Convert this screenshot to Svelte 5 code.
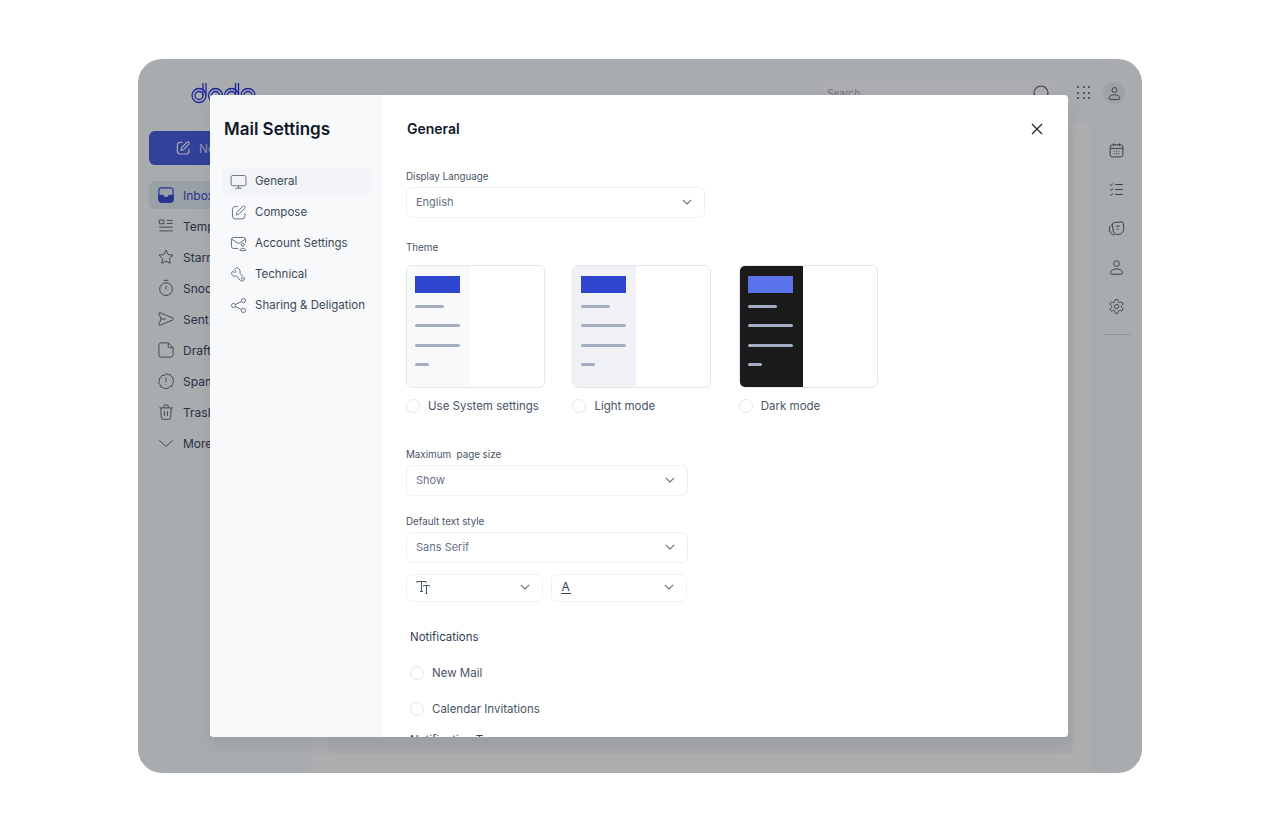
<script>
  const folders = [
    { label: "Inbox", icon: "inbox", active: true },
    { label: "Templates", icon: "templates" },
    { label: "Starred", icon: "star" },
    { label: "Snoozed", icon: "timer" },
    { label: "Sent", icon: "send" },
    { label: "Drafts", icon: "draft" },
    { label: "Spam", icon: "spam" },
    { label: "Trash", icon: "trash" },
    { label: "More", icon: "chevron" }
  ];

  const settings = [
    { label: "General", icon: "monitor", active: true },
    { label: "Compose", icon: "compose" },
    { label: "Account Settings", icon: "account" },
    { label: "Technical", icon: "wrench" },
    { label: "Sharing & Deligation", icon: "share" }
  ];

  const themes = [
    { label: "Use System settings", kind: "system" },
    { label: "Light mode", kind: "light" },
    { label: "Dark mode", kind: "dark" }
  ];

  const railIcons = ["calendar", "tasks", "notes", "person", "gear"];
  const previewLines = [29, 45, 45, 14];

  const icons = {
    inbox: "M6 2.500h12a3.500 3.500 0 0 1 3.500 3.500v12a3.500 3.500 0 0 1-3.500 3.500H6A3.500 3.500 0 0 1 2.500 18V6A3.500 3.500 0 0 1 6 2.500z",
    inboxTray: "M2.500 12.500H7c1 0 1.500.6 2 1.500s1.500 1.800 3 1.800 2.500-.9 3-1.800 1-1.500 2-1.500h4.500V18a3.500 3.500 0 0 1-3.500 3.500H6A3.500 3.500 0 0 1 2.500 18z",
    templates: "M3 4h6v5H3z M13 4.500h8 M13 8.500h8 M3 13.500h18 M3 18.500h18",
    star: "M12 2.800l2.800 5.900 6.400.9-4.600 4.500 1.100 6.400-5.700-3-5.700 3 1.100-6.400-4.600-4.500 6.400-.9z",
    timer: "M12 5a8.500 8.500 0 1 1 0 17 8.500 8.500 0 0 1 0-17z M9 1.800h6 M12 9v5",
    send: "M4 3.500c-1-.4-1.800.5-1.400 1.500L5.500 12l-2.900 7c-.4 1 .4 1.900 1.400 1.500l17-7.300c1-.5 1-1.900 0-2.400z M5.500 12h6",
    draft: "M6 2.500h9l6.500 6.500v9a3.500 3.500 0 0 1-3.500 3.500H6A3.500 3.500 0 0 1 2.500 18V6A3.500 3.500 0 0 1 6 2.500z M15 2.500V7a2 2 0 0 0 2 2h4.500",
    spam: "M12 2l2.600 1.700 3.100-.2 1.300 2.800 2.700 1.500-.6 3 1.400 2.800-2.100 2.200-.5 3.100-3 .5L14.500 21.700 12 22l-2.500-.3-1.900-1.300-3-.5-.5-3.100L2 14.600l1.400-2.800-.6-3 2.700-1.500 1.300-2.800 3.100.2z M12 7.500v6 M12 16v.6",
    trash: "M3 6.500h18 M9 6.500V4.200a1.500 1.500 0 0 1 1.500-1.500h3A1.500 1.500 0 0 1 15 4.200v2.300 M5 6.500l.8 13a2.500 2.500 0 0 0 2.500 2.300h7.400a2.500 2.500 0 0 0 2.500-2.300l.8-13 M10 11v6 M14 11v6",
    chevron: "M3 8.500l9 8 9-8",
    monitor: "M4 3.500h16a2.500 2.500 0 0 1 2.500 2.500v9.500a2.500 2.500 0 0 1-2.500 2.500H4a2.500 2.500 0 0 1-2.500-2.500V6A2.500 2.500 0 0 1 4 3.500z M12 18v3.500 M7.500 21.500h9",
    compose: "M11 3.500H7.500a4 4 0 0 0-4 4V17a4 4 0 0 0 4 4H17a4 4 0 0 0 4-4v-4 M9 15.500l.8-3.800L18 3.300a1.800 1.800 0 0 1 2.600 0l.2.200a1.800 1.800 0 0 1 0 2.600L12.500 14.700z",
    account: "M11.500 19H5a3 3 0 0 1-3-3V6.500a3 3 0 0 1 3-3h14a3 3 0 0 1 3 3V11 M2.500 6l7.500 5a3.500 3.500 0 0 0 4 0l7.500-5 M18 11.500a2.200 2.200 0 1 1 0 4.400 2.200 2.200 0 0 1 0-4.400z M14 22c0-2 1.500-3.200 4-3.200s4 1.200 4 3.200z",
    wrench: "M9.500 2.300L6.300 5.200l2.300 2.500-2 1.900-2.400-2.300L2.200 10c0 2.800 2.500 5 5.300 4.500.7-.1 1.300-.3 1.800-.6l5 6.300a3.400 3.400 0 0 0 5.200-4.400l-5.600-5.300c.3-.6.500-1.300.4-2.100-.2-3.300-1.800-5.700-4.300-6.100z M16.800 16.800a.9.9 0 1 1 0 1.800.9.9 0 0 1 0-1.800z",
    share: "M5 9a3 3 0 1 1 0 6 3 3 0 0 1 0-6z M19 2a3 3 0 1 1 0 6 3 3 0 0 1 0-6z M19 16a3 3 0 1 1 0 6 3 3 0 0 1 0-6z M7.700 10.600l8.600-4.200 M7.700 13.400l8.600 4.200",
    calendar: "M6 4h12a3 3 0 0 1 3 3v11a3 3 0 0 1-3 3H6a3 3 0 0 1-3-3V7a3 3 0 0 1 3-3z M3 9h18 M8 2v3.500 M16 2v3.500 M8 13h1.500 M11.300 13h1.500 M14.600 13h1.500 M8 16.500h1.500 M11.300 16.500h1.500 M14.600 16.500h1.500",
    tasks: "M10 5h11 M10 12h11 M10 19h11 M3 5l1.500 1.500L7 3.500 M3 12l1.500 1.500L7 10.500 M3 19l1.500 1.500L7 17.500",
    notes: "M9 3.500l10-.8a2.500 2.500 0 0 1 2.700 2.300l.4 7a8 8 0 0 1-7.500 8.500 7.500 7.500 0 0 1-7.600-6.500L6.500 6.500A2.800 2.800 0 0 1 9 3.500z M11.500 9l5-.6 M12 13l3-.4 M6 6.500C3 8 1.500 10.500 2 14c.5 4 3.500 7 7.500 7.500",
    person: "M12 2.500a4 4 0 1 1 0 8 4 4 0 0 1 0-8z M5.500 21.500a2 2 0 0 1-2-2.200c.3-3 3.600-5.300 8.500-5.300s8.200 2.300 8.500 5.300a2 2 0 0 1-2 2.200z",
    gear: "M12.220 2h-.44a2 2 0 0 0-2 2v.18a2 2 0 0 1-1 1.730l-.43.250a2 2 0 0 1-2 0l-.15-.08a2 2 0 0 0-2.730.730l-.22.380a2 2 0 0 0 .73 2.730l.15.100a2 2 0 0 1 1 1.720v.510a2 2 0 0 1-1 1.740l-.15.090a2 2 0 0 0-.73 2.730l.22.380a2 2 0 0 0 2.730.730l.15-.08a2 2 0 0 1 2 0l.43.250a2 2 0 0 1 1 1.730V20a2 2 0 0 0 2 2h.44a2 2 0 0 0 2-2v-.18a2 2 0 0 1 1-1.730l.43-.25a2 2 0 0 1 2 0l.15.080a2 2 0 0 0 2.730-.73l.22-.39a2 2 0 0 0-.73-2.730l-.15-.08a2 2 0 0 1-1-1.740v-.5a2 2 0 0 1 1-1.740l.15-.09a2 2 0 0 0 .73-2.730l-.22-.38a2 2 0 0 0-2.730-.73l-.15.080a2 2 0 0 1-2 0l-.43-.25a2 2 0 0 1-1-1.730V4a2 2 0 0 0-2-2z M12 9a3 3 0 1 1 0 6 3 3 0 0 1 0-6z"
  };
</script>

{#snippet chevron()}
  <svg width="10" height="6" viewBox="0 0 10 6" fill="none" stroke="#667085" stroke-width="1.100"><path d="M.8.8 5 5 9.200.8" /></svg>
{/snippet}

<div class="frame">
  <div class="app">
    <header class="topbar">
      <svg class="logo" width="66" height="24" viewBox="0 0 66 24" fill="none" stroke="#1d2ddb" stroke-width="1.300">
        <circle cx="8" cy="13.500" r="7" />
        <circle cx="8" cy="13.500" r="4" />
        <path d="M15 13.500V1M12 13.500V1" />
        <circle cx="24.500" cy="13.500" r="7" />
        <circle cx="24.500" cy="13.500" r="4" />
        <circle cx="40.500" cy="13.500" r="7" />
        <circle cx="40.500" cy="13.500" r="4" />
        <path d="M47.500 13.500V1M44.500 13.500V1" />
        <circle cx="57" cy="13.500" r="7" />
        <circle cx="57" cy="13.500" r="4" />
      </svg>
      <div class="search">
        <span>Search</span>
        <svg width="16" height="16" viewBox="0 0 16 16" fill="none" stroke="#4b5563" stroke-width="1.200"><circle cx="8" cy="8" r="7" /></svg>
      </div>
      <div class="dots">
        {#each Array(9) as _}<i></i>{/each}
      </div>
      <div class="avatar">
        <svg width="15" height="15" viewBox="0 0 24 24" fill="none" stroke="#4b5563" stroke-width="1.500"><path d={icons.person} /></svg>
      </div>
    </header>

    <div class="workspace">
      <aside class="sidebar">
        <button class="new-mail">
          <svg width="16" height="16" viewBox="0 0 24 24" fill="none" stroke="#fff" stroke-width="1.700"><path d={icons.compose} /></svg>
          New Mail
        </button>
        <nav class="folders">
          {#each folders as f}
            <div class="folder" class:active={f.active}>
              {#if f.active}
                <svg width="18" height="18" viewBox="0 0 24 24" fill="none" stroke="#2f45d0" stroke-width="1.600">
                  <path d={icons.inbox} />
                  <path d={icons.inboxTray} fill="#2f45d0" />
                </svg>
              {:else}
                <svg width="18" height="18" viewBox="0 0 24 24" fill="none" stroke="#566070" stroke-width="1.300"><path d={icons[f.icon]} /></svg>
              {/if}
              <span>{f.label}</span>
            </div>
          {/each}
        </nav>
      </aside>

      <main class="main">
        <div class="panel"></div>
      </main>

      <aside class="rail">
        {#each railIcons as r}
          <div class="rail-item">
            <svg width="17" height="17" viewBox="0 0 24 24" fill="none" stroke="#4b5563" stroke-width="1.400"><path d={icons[r]} /></svg>
          </div>
        {/each}
        <div class="rail-rule"></div>
      </aside>
    </div>
  </div>

  <div class="scrim"></div>

  <div class="modal">
    <div class="modal-side">
      <h2>Mail Settings</h2>
      <ul>
        {#each settings as s}
          <li class:active={s.active}>
            <svg width="17" height="17" viewBox="0 0 24 24" fill="none" stroke="#5b6472" stroke-width="1.250"><path d={icons[s.icon]} /></svg>
            <span>{s.label}</span>
          </li>
        {/each}
      </ul>
    </div>

    <div class="modal-body">
      <div class="modal-head">
        <h3>General</h3>
        <svg class="close" width="12" height="12" viewBox="0 0 12 12" fill="none" stroke="#1f2937" stroke-width="1.300"><path d="M1 1l10 10M11 1L1 11" /></svg>
      </div>

      <label class="field-label first">Display Language</label>
      <div class="select wide">
        <span>English</span>
        {@render chevron()}
      </div>

      <label class="field-label theme-label">Theme</label>
      <div class="themes">
        {#each themes as t}
          <div class="theme">
            <div class="preview {t.kind}">
              <div class="preview-side">
                <div class="preview-block"></div>
                {#each previewLines as w}
                  <div class="preview-line" style="width: {w}px"></div>
                {/each}
              </div>
            </div>
            <div class="radio-row">
              <span class="radio"></span>
              <span class="radio-text">{t.label}</span>
            </div>
          </div>
        {/each}
      </div>

      <label class="field-label max-label">Maximum&nbsp; page size</label>
      <div class="select">
        <span>Show</span>
        {@render chevron()}
      </div>

      <label class="field-label style-label">Default text style</label>
      <div class="select">
        <span>Sans Serif</span>
        {@render chevron()}
      </div>

      <div class="pair">
        <div class="select small">
          <svg width="14" height="14" viewBox="0 0 14 14" fill="none" stroke="#475467" stroke-width="1"><path d="M1 3V1.500h9V3 M5.500 1.500v10 M4 11.500h3 M7.500 6.500v-1h6v1 M10.500 5.500v8 M9.500 13.500h2" /></svg>
          {@render chevron()}
        </div>
        <div class="select small">
          <span class="font-a">A</span>
          {@render chevron()}
        </div>
      </div>

      <div class="notify">
        <p class="notify-title">Notifications</p>
        <div class="radio-row"><span class="radio"></span><span class="radio-text">New Mail</span></div>
        <div class="radio-row"><span class="radio"></span><span class="radio-text">Calendar Invitations</span></div>
        <p class="notify-type">Notification Type</p>
      </div>
    </div>
  </div>
</div>

<style>
  :global(body) {
    background: #fff;
  }

  .frame {
    position: relative;
    width: 1004px;
    height: 714px;
    margin: 59px 0 0 138px;
    border-radius: 24px;
    overflow: hidden;
    font-family: Inter, "Liberation Sans", sans-serif;
    color: #101828;
  }

  .app {
    display: flex;
    flex-direction: column;
    height: 100%;
    background: #f8fcfc;
  }

  .topbar {
    height: 66px;
    flex-shrink: 0;
    display: flex;
    align-items: flex-start;
    padding: 18px 17px 0 53px;
    box-sizing: border-box;
  }

  .logo {
    margin-top: 5px;
    margin-right: 561px;
  }

  .search {
    display: flex;
    justify-content: space-between;
    width: 239px;
    height: 34px;
    padding: 7px 7px 0 8px;
    box-sizing: border-box;
    border-radius: 5px;
    background: #fcfcfd;
    border: 1px solid #f2f4f7;
    font-size: 10px;
    color: #98a2b3;
  }

  .search span {
    padding-top: 2px;
  }

  .dots {
    display: grid;
    grid-template-columns: repeat(3, 2px);
    gap: 3.500px;
    margin: 9px 0 0 20px;
  }

  .dots i {
    width: 2px;
    height: 2px;
    border-radius: 50%;
    background: #475467;
  }

  .avatar {
    width: 22px;
    height: 22px;
    margin: 5px 0 0 13px;
    display: flex;
    align-items: center;
    justify-content: center;
    border-radius: 50%;
    background: #eaecf0;
  }

  .workspace {
    flex: 1;
    display: flex;
    min-height: 0;
  }

  .sidebar {
    width: 173px;
    flex-shrink: 0;
    padding: 6px 0 0 11px;
    box-sizing: border-box;
  }

  .new-mail {
    display: flex;
    align-items: center;
    gap: 8px;
    width: 150px;
    height: 34px;
    padding: 0 0 0 26px;
    border: 0;
    border-radius: 6px;
    background: #3f56db;
    color: rgba(255, 255, 255, 0.75);
    font: 400 12px Inter, sans-serif;
  }

  .folders {
    margin-top: 16px;
    display: flex;
    flex-direction: column;
    gap: 3px;
  }

  .folder {
    display: flex;
    align-items: center;
    gap: 8px;
    height: 28px;
    padding-left: 8px;
    border-radius: 6px;
    font-size: 12px;
    color: #344054;
  }

  .folder.active {
    background: #e0eaf0;
    color: #2f45d0;
  }

  .main {
    flex: 1;
    display: flex;
    background: #fff;
    padding: 0 17px 19px 17px;
  }

  .panel {
    flex: 1;
    border-radius: 6px;
    background: #f4f7f7;
  }

  .rail {
    width: 52px;
    flex-shrink: 0;
    padding-top: 17px;
    box-sizing: border-box;
  }

  .rail-item {
    display: flex;
    justify-content: center;
    height: 17px;
  }

  .rail-item + .rail-item {
    margin-top: 22px;
  }

  .rail-rule {
    height: 1px;
    margin: 19px 11px 0 13px;
    background: #d0d5dd;
  }

  .scrim {
    position: absolute;
    inset: 0;
    background: rgba(22, 24, 32, 0.35);
  }

  .modal {
    position: absolute;
    left: 72px;
    top: 36px;
    width: 858px;
    height: 642px;
    display: flex;
    overflow: hidden;
    border-radius: 4px;
    background: #fff;
    box-shadow: 0 8px 16px rgba(16, 24, 40, 0.08);
  }

  .modal-side {
    width: 173px;
    flex-shrink: 0;
    padding: 23px 11px 0 12px;
    box-sizing: border-box;
    background: #f7f9fb;
  }

  .modal-side h2 {
    margin: 0 0 27px 2px;
    font-size: 17px;
    line-height: 22px;
    font-weight: 600;
    color: #101828;
  }

  .modal-side ul {
    display: flex;
    flex-direction: column;
    gap: 3px;
    margin: 0;
    padding: 0;
    list-style: none;
  }

  .modal-side li {
    display: flex;
    align-items: center;
    gap: 8px;
    height: 28px;
    padding-left: 8px;
    border-radius: 6px;
    font-size: 11.500px;
    color: #3d4859;
    white-space: nowrap;
  }

  .modal-side li.active {
    background: #f2f4f7;
  }

  .modal-body {
    flex: 1;
    padding: 0 0 0 23px;
    min-width: 0;
  }

  .modal-head {
    display: flex;
    align-items: center;
    justify-content: space-between;
    height: 68px;
    padding: 0 25px 0 1px;
  }

  .modal-head h3 {
    margin: 0 0 2px;
    font-size: 14px;
    font-weight: 600;
    color: #101828;
  }

  .field-label {
    display: block;
    height: 14px;
    margin-bottom: 3px;
    font-size: 9.800px;
    line-height: 14px;
    color: #475467;
  }

  .first {
    margin-top: 7px;
  }

  .theme-label {
    margin-top: 23px;
    margin-bottom: 10px;
  }

  .max-label {
    margin-top: 35px;
  }

  .style-label {
    margin-top: 19px;
  }

  .select {
    display: flex;
    align-items: center;
    justify-content: space-between;
    width: 282px;
    height: 31px;
    padding: 0 12px 2px 9px;
    box-sizing: border-box;
    border: 1px solid #eef0f3;
    border-radius: 6px;
    font-size: 11px;
    color: #667085;
  }

  .select.wide {
    width: 299px;
  }

  .pair {
    display: flex;
    gap: 8px;
    margin-top: 11px;
  }

  .select.small {
    width: 136.500px;
    height: 28px;
  }

  .font-a {
    font-size: 12px;
    line-height: 12px;
    color: #344054;
    border-bottom: 1px solid #344054;
    padding: 0 1px;
  }

  .themes {
    display: flex;
    gap: 27.400px;
  }

  .theme {
    width: 139px;
  }

  .preview {
    height: 123px;
    box-sizing: border-box;
    border: 1px solid #e4e7ec;
    border-radius: 6px;
    overflow: hidden;
  }

  .preview-side {
    display: flex;
    flex-direction: column;
    gap: 16.500px;
    width: 63px;
    height: 100%;
    padding: 10px 0 0 8px;
    box-sizing: border-box;
    background: #f8f9fb;
  }

  .light .preview-side {
    background: #f0f2f6;
  }

  .dark .preview-side {
    background: #1a1a1a;
  }

  .preview-block {
    width: 45px;
    height: 17px;
    margin-bottom: -5px;
    background: #2f45d0;
  }

  .dark .preview-block {
    background: #5a72ea;
  }

  .preview-line {
    height: 3px;
    border-radius: 2px;
    background: #a5adc3;
  }

  .radio-row {
    display: flex;
    align-items: center;
    gap: 8px;
    height: 14px;
    margin-top: 11px;
  }

  .radio {
    width: 14px;
    height: 14px;
    box-sizing: border-box;
    border: 1px solid #e4e7ec;
    border-radius: 50%;
    background: #fff;
  }

  .radio-text {
    font-size: 11.500px;
    color: #475467;
    white-space: nowrap;
  }

  .notify {
    padding-left: 4px;
    margin-top: 27px;
  }

  .notify-title {
    margin: 0 0 10px;
    font-size: 11.500px;
    line-height: 16px;
    color: #344054;
  }

  .notify .radio-row {
    margin-top: 0;
    margin-bottom: 22px;
  }

  .notify .radio-row:first-of-type {
    margin-top: 21px;
  }

  .notify-type {
    margin: -6px 0 0;
    font-size: 11.500px;
    line-height: 16px;
    color: #344054;
  }
</style>
